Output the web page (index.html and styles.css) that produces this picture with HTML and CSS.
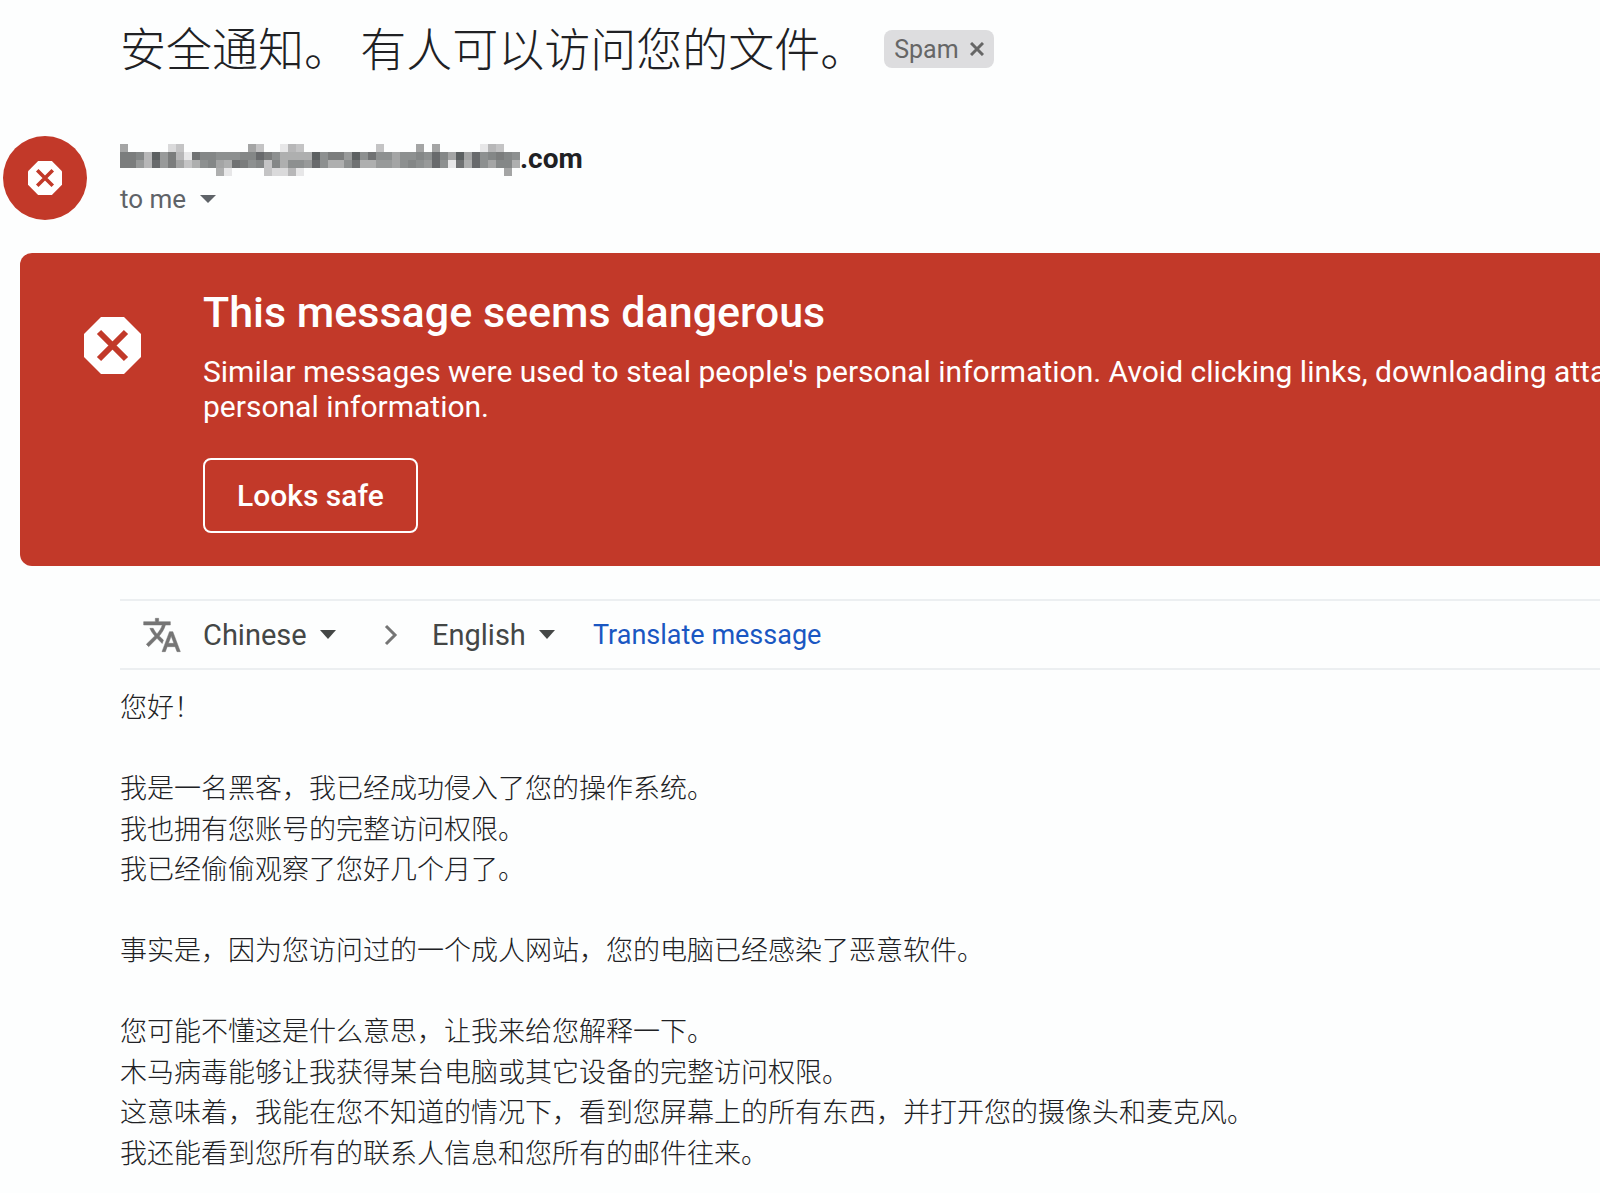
FILE: index.html
```html
<!DOCTYPE html>
<html lang="en">
<head>
    <meta charset="UTF-8">
    <meta name="viewport" content="width=device-width, initial-scale=1.0">
    <title>Mail</title>
    <link rel="stylesheet" href="styles.css">
</head>
<body>
    <header class="subject">
        <h1 lang="zh-CN">安全通知。 有人可以访问您的文件。</h1>
        <span class="tag">Spam
            <button class="tag-remove" type="button" aria-label="Remove label">
                <svg width="14" height="14" viewBox="0 0 14 14"><path d="M1 1l12 12M13 1L1 13" stroke="currentColor" stroke-width="3"/></svg>
            </button>
        </span>
    </header>

    <section class="sender">
        <div class="avatar">
            <svg width="34" height="34" viewBox="0 0 57 57">
                <path d="M17 0h23l17 17v23L40 57H17L0 40V17z" fill="#fff"/>
                <path d="M15.500 15.500l26 26M41.500 15.500l-26 26" stroke="#c23929" stroke-width="6"/>
            </svg>
        </div>
        <div class="sender-info">
            <div class="address">
                <!-- hidden part of the address -->
                <svg class="mosaic" width="400" height="32" viewBox="0 0 50 4" shape-rendering="crispEdges" role="img" aria-label="Hidden address">
                    <path stroke="#5c6061" d="M4 1.500h1M24 1.500h1M29 1.500h1M42 1.500h1"/>
                    <path stroke="#686a6c" d="M17 1.500h1M39 1.500h1M44 1.500h1M4 2.500h1M24 2.500h1M39 2.500h1M44 2.500h1"/>
                    <path stroke="#707273" d="M9 1.500h1M31 1.500h1M14 2.500h1M29 2.500h1M42 2.500h1"/>
                    <path stroke="#7b7d7d" d="M0 1.500h2M6 1.500h1M18 1.500h1M26 1.500h2M47 1.500h1M0 2.500h2M6 2.500h1M15 2.500h1"/>
                    <path stroke="#848787" d="M2 1.500h1M10 1.500h2M15 1.500h2M37 1.500h1M40 1.500h1M46 1.500h1M48 1.500h1M11 2.500h1M17 2.500h1M19 2.500h1M36 2.500h1M47 2.500h2"/>
                    <path stroke="#8d9090" d="M12 1.500h3M19 1.500h1M25 1.500h1M30 1.500h1M32 1.500h2M35 1.500h2M38 1.500h1M45 1.500h1M49 1.500h1M10 2.500h1M16 2.500h1M21 2.500h2M25 2.500h1M28 2.500h1M35 2.500h1M37 2.500h1M40 2.500h1M45 2.500h1"/>
                    <path stroke="#989a9a" d="M5 1.500h1M28 1.500h1M2 2.500h1M5 2.500h1M23 2.500h1M32 2.500h2M38 2.500h1"/>
                    <path stroke="#a4a5a5" d="M0 .5h1M16 .5h1M37 .5h1M39 .5h1M34 1.500h1M41 1.500h1M43 1.500h1M7 2.500h1M12 2.500h1M34 2.500h1M46 2.500h1M48 3.500h1"/>
                    <path stroke="#aeafaf" d="M20 1.500h4M9 2.500h1M13 2.500h1M20 2.500h1M26 2.500h2M30 2.500h2M43 2.500h1M49 2.500h1M12 3.500h1"/>
                    <path stroke="#b7b7b8" d="M21 .5h1M46 .5h1M3 1.500h1M7 1.500h1M3 2.500h1M21 3.500h1"/>
                    <path stroke="#c4c4c5" d="M7 .5h1M17 .5h1M22 .5h1M32 .5h1M47 .5h1M8 2.500h1M18 2.500h1M18 3.500h1"/>
                    <path stroke="#dadadb" d="M6 .5h1M19 3.500h2"/>
                    <path stroke="#e7e7e8" d="M20 .5h1M45 .5h1M8 1.500h1M41 2.500h1M13 3.500h1M22 3.500h1"/>
                </svg><span class="domain">.com</span>
            </div>
            <button class="recipient" type="button">to me
                <svg width="16" height="8" viewBox="0 0 16 8"><path d="M0 0h16L8 8z" fill="currentColor"/></svg>
            </button>
        </div>
    </section>

    <section class="warning">
        <svg class="warning-icon" width="57" height="57" viewBox="0 0 57 57">
            <path d="M17 0h23l17 17v23L40 57H17L0 40V17z" fill="#fff"/>
            <path d="M15 15l27 27M42 15L15 42" stroke="#c23929" stroke-width="6"/>
        </svg>
        <div class="warning-text">
            <h2>This message seems dangerous</h2>
            <p>Similar messages were used to steal people's personal information. Avoid clicking links, downloading attachments, or replying with<br>personal information.</p>
            <button class="safe-button" type="button">Looks safe</button>
        </div>
    </section>

    <main class="message">
        <div class="translate">
            <svg class="translate-icon" width="40" height="40" viewBox="0 0 24 24"><path fill="#757575" stroke="#757575" stroke-width=".3" d="M12.870 15.070l-2.540-2.510.03-.03c1.740-1.940 2.980-4.170 3.710-6.530H17V4h-7V2H8v2H1v1.990h11.170C11.500 7.920 10.440 9.750 9 11.350 8.070 10.320 7.300 9.190 6.690 8h-2c.73 1.630 1.730 3.170 2.980 4.560l-5.090 5.020L4 19l5-5 3.110 3.110.76-2.040zM18.500 10h-2L12 22h2l1.120-3h4.750L21 22h2l-4.500-12zm-2.620 7l1.620-4.330L19.120 17h-3.240z"/></svg>
            <span class="language">
                <select aria-label="Translate from">
                    <option>Chinese</option>
                </select>
                <svg width="16" height="9" viewBox="0 0 16 9"><path d="M0 0h16L8 9z" fill="currentColor"/></svg>
            </span>
            <svg class="chevron" width="14" height="22" viewBox="0 0 14 22"><path d="M2 2l9 9-9 9" fill="none" stroke="#757575" stroke-width="3"/></svg>
            <span class="language">
                <select aria-label="Translate to">
                    <option>English</option>
                </select>
                <svg width="16" height="9" viewBox="0 0 16 9"><path d="M0 0h16L8 9z" fill="currentColor"/></svg>
            </span>
            <a class="translate-link" href="#">Translate message</a>
        </div>

        <div class="body-text" lang="zh-CN">
            <p>您好！</p>
            <p>我是一名黑客，我已经成功侵入了您的操作系统。<br>
            我也拥有您账号的完整访问权限。<br>
            我已经偷偷观察了您好几个月了。</p>
            <p>事实是，因为您访问过的一个成人网站，您的电脑已经感染了恶意软件。</p>
            <p>您可能不懂这是什么意思，让我来给您解释一下。<br>
            木马病毒能够让我获得某台电脑或其它设备的完整访问权限。<br>
            这意味着，我能在您不知道的情况下，看到您屏幕上的所有东西，并打开您的摄像头和麦克风。<br>
            我还能看到您所有的联系人信息和您所有的邮件往来。</p>
        </div>
    </main>
</body>
</html>
```
FILE: styles.css
```css
* {
    box-sizing: border-box;
}
body {
    margin: 0;
    background: #fdfefe;
    color: #202124;
    font-family: Roboto, "Noto Sans CJK SC", sans-serif;
    overflow-x: hidden;
}
h1, h2, p {
    margin: 0;
}
button, select {
    font-family: inherit;
    color: inherit;
    background: none;
    border: none;
    padding: 0;
    cursor: pointer;
}
svg {
    display: block;
    flex-shrink: 0;
}
.subject {
    display: flex;
    align-items: center;
    gap: 18px;
    height: 98px;
    padding-left: 120px;
}
.subject h1 {
    padding-bottom: 6px;
    font-family: "Noto Sans CJK SC", sans-serif;
    font-size: 46px;
    font-weight: 300;
    white-space: nowrap;
}
.tag {
    display: flex;
    align-items: center;
    gap: 11px;
    height: 38px;
    padding: 0 10px;
    border-radius: 8px;
    background: #dddddf;
    color: #666;
    font-size: 25px;
}
.sender {
    display: flex;
    gap: 33px;
    padding: 38px 0 33px 3px;
}
.avatar {
    display: flex;
    align-items: center;
    justify-content: center;
    width: 84px;
    height: 84px;
    border-radius: 50%;
    background: #c23929;
}
.address {
    display: flex;
    align-items: center;
    height: 48px;
    font-size: 28px;
    font-weight: 700;
}
.domain {
    padding-bottom: 4px;
}
.recipient {
    display: flex;
    align-items: center;
    gap: 14px;
    height: 30px;
    color: #5f6368;
    font-size: 26px;
}
.warning {
    display: flex;
    gap: 62px;
    margin-left: 20px;
    padding: 32px 0 33px 64px;
    border-radius: 12px 0 0 12px;
    background: #c23929;
    color: #fff;
    overflow: hidden;
}
.warning-icon {
    margin-top: 32px;
}
.warning h2 {
    font-size: 43px;
    font-weight: 500;
    line-height: 54px;
}
.warning p {
    margin: 15px 0 34px;
    font-size: 30px;
    line-height: 35px;
    white-space: nowrap;
}
.safe-button {
    height: 75px;
    padding: 0 32px;
    border: 2px solid #fff;
    border-radius: 8px;
    font-size: 30px;
    font-weight: 500;
}
.message {
    padding: 33px 0 20px 120px;
}
.translate {
    display: flex;
    align-items: center;
    height: 71px;
    padding-left: 22px;
    border-top: 2px solid #eceff1;
    border-bottom: 2px solid #eceff1;
}
.language {
    display: flex;
    align-items: center;
    gap: 13px;
    color: #444746;
}
.language select {
    appearance: none;
    font-size: 29px;
}
.translate-icon {
    margin-right: 21px;
}
.chevron {
    margin: 0 34px 0 48px;
}
.translate-link {
    margin-left: 38px;
    color: #1a57c2;
    font-size: 27px;
    text-decoration: none;
}
.body-text {
    padding-top: 16px;
    font-family: "Noto Sans CJK SC", sans-serif;
    font-size: 27px;
    font-weight: 300;
    line-height: 1.5;
}
.body-text p + p {
    margin-top: 1.5em;
}
```
